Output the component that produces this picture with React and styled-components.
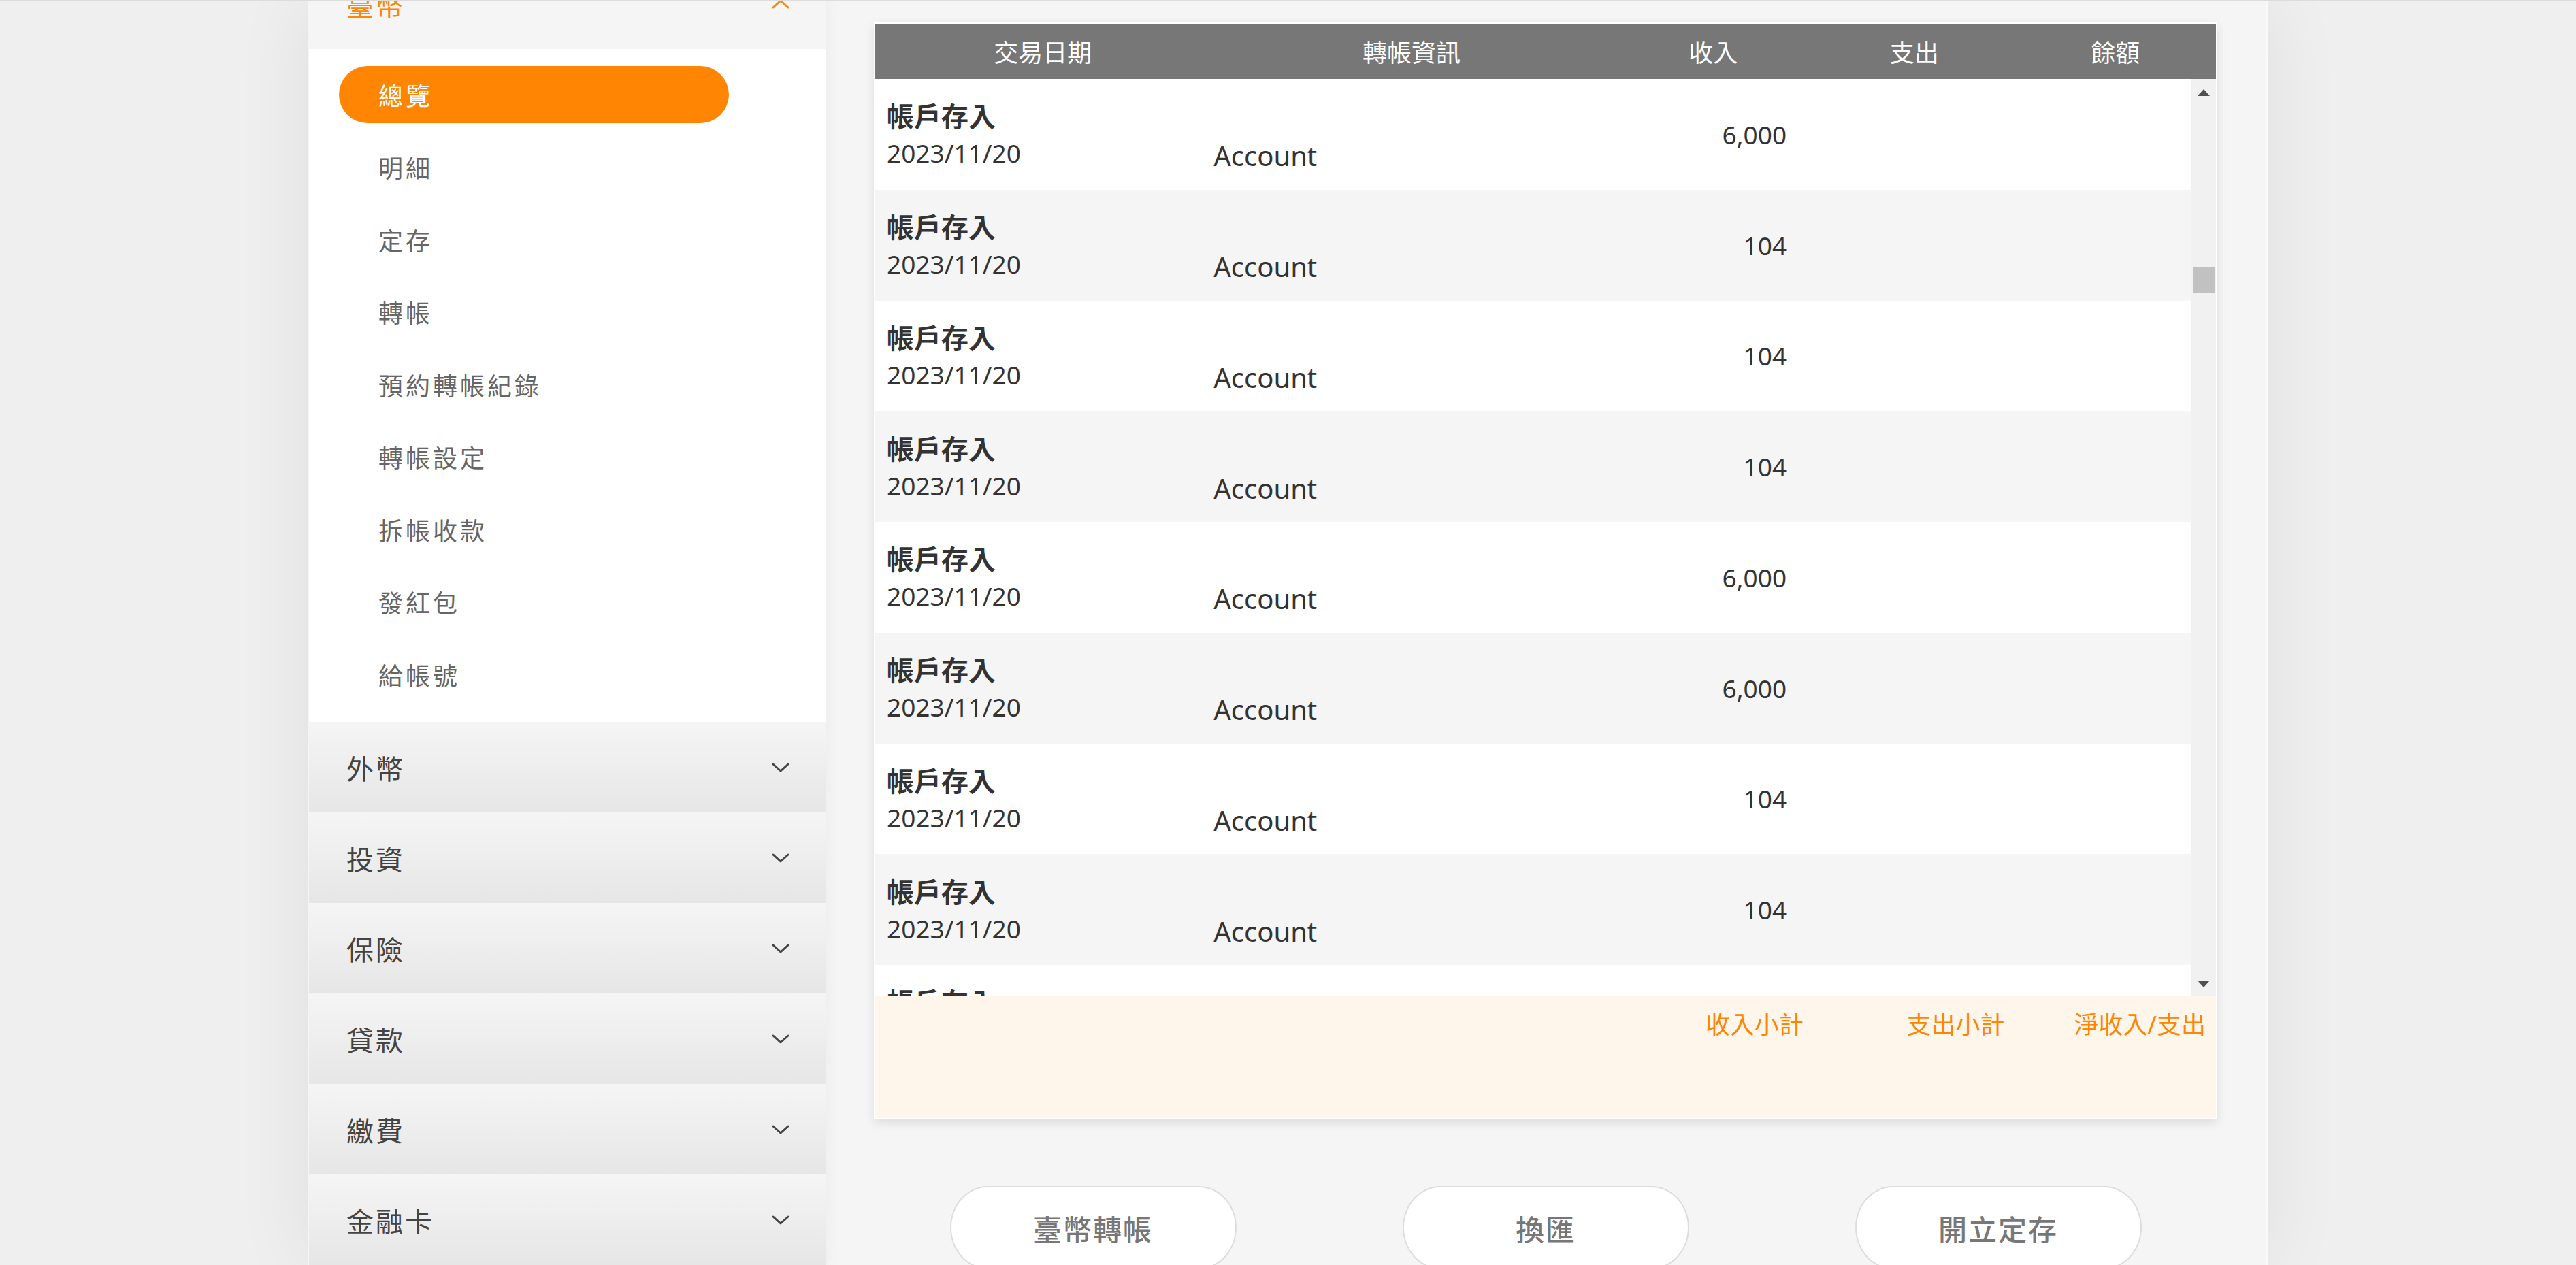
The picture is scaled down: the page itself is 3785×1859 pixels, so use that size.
import React, { useLayoutEffect, useRef } from "react";
import styled, { createGlobalStyle } from "styled-components";

const ORANGE = "#ff8503";

const GlobalStyle = createGlobalStyle`
  html, body {
    margin: 0;
    padding: 0;
    height: 100%;
  }
  body {
    background: #efefef;
    font-family: "Noto Sans", "Noto Sans CJK TC", sans-serif;
    overflow: hidden;
  }
  * {
    box-sizing: border-box;
  }
`;

const menu = ["總覽", "明細", "定存", "轉帳", "預約轉帳紀錄", "轉帳設定", "拆帳收款", "發紅包", "給帳號"];
const sections = ["外幣", "投資", "保險", "貸款", "繳費", "金融卡"];
const rows = ["6,000", "104", "104", "104", "6,000", "6,000", "104", "104", ""];

function Chevron({ up, color }) {
  return (
    <svg width="26" height="16" viewBox="0 0 26 16" style={{ transform: up ? "rotate(180deg)" : "none" }}>
      <polyline points="2,3 13,13 24,3" fill="none" stroke={color} strokeWidth="3" strokeLinecap="round" strokeLinejoin="round" />
    </svg>
  );
}

export default function App() {
  const sideRef = useRef(null);

  // the side menu is shown scrolled a little, as in the capture
  useLayoutEffect(() => {
    if (sideRef.current) sideRef.current.scrollTop = 62;
  }, []);

  return (
    <>
      <GlobalStyle />
      <Page>
        <Shell>
          <Sidebar ref={sideRef}>
            <SectionHeader open>
              <span>臺幣</span>
              <Chevron up color={ORANGE} />
            </SectionHeader>
            <SubList>
              {menu.map((m, i) => (
                <SubItem key={m} active={i === 0}>
                  {m}
                </SubItem>
              ))}
            </SubList>
            {sections.map((s) => (
              <SectionHeader key={s}>
                <span>{s}</span>
                <Chevron color="#444" />
              </SectionHeader>
            ))}
          </Sidebar>

          <Main>
            <Card>
              <HeadRow>
                <span>交易日期</span>
                <span>轉帳資訊</span>
                <span>收入</span>
                <span>支出</span>
                <span>餘額</span>
              </HeadRow>
              <Body>
                <Viewport>
                  {rows.map((amount, i) => (
                    <Row key={i} even={i % 2 === 1}>
                      <DateCell>
                        <RowTitle>帳戶存入</RowTitle>
                        <RowDate>2023/11/20</RowDate>
                      </DateCell>
                      <InfoCell>Account</InfoCell>
                      <AmountCell>{amount}</AmountCell>
                      <AmountCell />
                      <AmountCell />
                    </Row>
                  ))}
                </Viewport>
                <ScrollTrack>
                  <Arrow />
                  <Thumb style={{ marginTop: 252 }} />
                  <Spacer />
                  <Arrow down />
                </ScrollTrack>
              </Body>
              <Footer>
                <span />
                <span />
                <FootLabel>收入小計</FootLabel>
                <FootLabel>支出小計</FootLabel>
                <FootLabel>淨收入/支出</FootLabel>
              </Footer>
            </Card>

            <Actions>
              <ActionButton>臺幣轉帳</ActionButton>
              <ActionButton>換匯</ActionButton>
              <ActionButton>開立定存</ActionButton>
            </Actions>
          </Main>
        </Shell>
      </Page>
    </>
  );
}

const Page = styled.div`
  height: 100vh;
  display: flex;
  justify-content: center;
  border-top: 1px solid #dcdcdc;
  overflow: hidden;
`;

const Shell = styled.div`
  width: 2879px;
  height: 100%;
  display: flex;
  box-shadow: 0 0 110px rgba(0, 0, 0, 0.07);
  border-left: 1px solid #f7f7f7;
  border-right: 2px solid #fafafa;
`;

const Sidebar = styled.nav`
  width: 760px;
  flex-shrink: 0;
  height: 100%;
  overflow-y: auto;
  background: #fff;
  position: relative;
  z-index: 1;
  box-shadow: 6px 0 18px rgba(0, 0, 0, 0.03);
  scrollbar-width: none;
  &::-webkit-scrollbar {
    display: none;
  }
`;

const SectionHeader = styled.div`
  height: 133px;
  display: flex;
  align-items: center;
  justify-content: space-between;
  padding: 0 54px 0 55px;
  font-size: 40px;
  letter-spacing: 3px;
  color: ${(p) => (p.open ? ORANGE : "#444")};
  background: ${(p) => (p.open ? "#f5f5f5" : "linear-gradient(#f5f5f5, #e6e6e6)")};
`;

const SubList = styled.div`
  display: flex;
  flex-direction: column;
  gap: 22.5px;
  padding: 25px 0 28px;
  background: #fff;
`;

const SubItem = styled.div`
  width: 573px;
  height: 84px;
  margin-left: 44px;
  padding-left: 58px;
  border-radius: 42px;
  display: flex;
  align-items: center;
  font-size: 36px;
  letter-spacing: 4px;
  color: ${(p) => (p.active ? "#fff" : "#666")};
  background: ${(p) => (p.active ? ORANGE : "transparent")};
`;

const Main = styled.main`
  flex: 1;
  background: #f5f5f5;
  padding: 32px 72px 0 70px;
  display: flex;
  flex-direction: column;
`;

const Card = styled.section`
  background: #fff;
  border: 2px solid #fff;
  box-shadow: 0 5px 14px rgba(0, 0, 0, 0.1);
`;

const columns = "25% 30% 15% 15% 15%";

const HeadRow = styled.div`
  display: grid;
  grid-template-columns: ${columns};
  align-items: center;
  height: 81px;
  background: #777;
  color: #fff;
  font-size: 36px;
  text-align: center;
`;

const Body = styled.div`
  display: flex;
  height: 1348px;
`;

const Viewport = styled.div`
  flex: 1;
  overflow: hidden;
`;

const Row = styled.div`
  display: grid;
  grid-template-columns: ${columns};
  align-items: center;
  height: 162.75px;
  background: ${(p) => (p.even ? "#f5f5f5" : "#fff")};
  color: #333;
`;

const DateCell = styled.div`
  display: flex;
  flex-direction: column;
  padding-left: 17px;
  gap: 8px;
`;

const RowTitle = styled.div`
  font-size: 40px;
  font-weight: 600;
  line-height: 48px;
  color: #333;
`;

const RowDate = styled.div`
  font-size: 37px;
  line-height: 44px;
`;

const InfoCell = styled.div`
  font-size: 40px;
  line-height: 48px;
  padding: 64px 0 0 14px;
`;

const AmountCell = styled.div`
  font-size: 37px;
  text-align: right;
  padding-right: 14px;
`;

const ScrollTrack = styled.div`
  width: 37px;
  background: #f1f1f1;
  display: flex;
  flex-direction: column;
  align-items: center;
  padding: 15px 0 13px;
`;

const Arrow = styled.div`
  width: 0;
  height: 0;
  border-left: 9.5px solid transparent;
  border-right: 9.5px solid transparent;
  ${(p) =>
    p.down ? "border-top: 10px solid #505050;" : "border-bottom: 10px solid #505050;"}
`;

const Thumb = styled.div`
  width: 32px;
  height: 38px;
  background: #c1c1c1;
`;

const Spacer = styled.div`
  flex: 1;
`;

const Footer = styled.div`
  display: grid;
  grid-template-columns: ${columns};
  align-items: start;
  height: 179px;
  padding-top: 13px;
  background: #fef6ea;
`;

const FootLabel = styled.span`
  font-size: 36px;
  color: ${ORANGE};
  text-align: right;
  padding-right: 15px;
`;

const Actions = styled.div`
  display: flex;
  justify-content: center;
  gap: 244px;
  margin-top: 98px;
`;

const ActionButton = styled.button`
  width: 421px;
  height: 122px;
  flex-shrink: 0;
  background: #fff;
  border: 2px solid #ddd;
  border-radius: 55px / 61px;
  font-family: "Noto Sans", "Noto Sans CJK TC", sans-serif;
  font-size: 42px;
  font-weight: 500;
  letter-spacing: 2px;
  color: #777;
  cursor: pointer;
`;
